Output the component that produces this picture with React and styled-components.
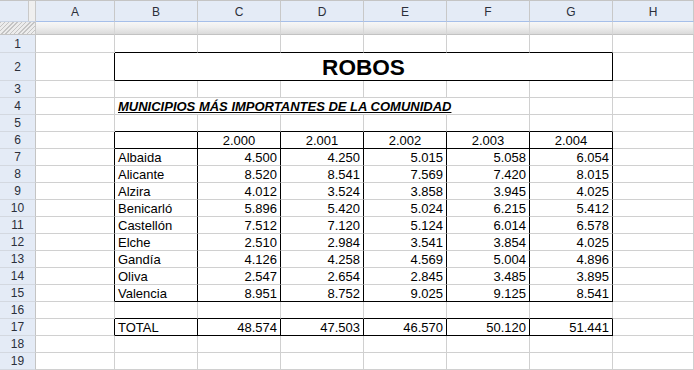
import React from "react";
import styled, { createGlobalStyle } from "styled-components";

const GlobalStyle = createGlobalStyle`
  html, body { margin: 0; padding: 0; background: #fff; overflow: hidden; }
  body { font-family: "Liberation Sans", Arial, sans-serif; }
`;

const COLS = ["A", "B", "C", "D", "E", "F", "G", "H"];
const GRID = "#d0d0d0";
const INK = "#000";

const Sheet = styled.div`
  display: grid;
  grid-template-columns: 36px 79px repeat(6, 83px) 81px;
  grid-template-rows: 22px 13px 18px 28px repeat(17, 17px);
  width: 694px;
  height: 370px;
  background: #fff;
`;

const Corner = styled.div`
  position: relative;
  box-sizing: border-box;
  background: #e4ebf6;
  border-top: 1px solid #c4c4c4;
  border-bottom: 1px solid #c8d3e4;
  border-right: 1px solid #c8c8c8;
`;

const Splitter = styled.div`
  position: absolute;
  top: 0;
  bottom: 0;
  right: 0;
  width: 7px;
  box-sizing: border-box;
  border-left: 1px solid #c9c9c9;
  background-color: #e6e6e6;
  background-image: radial-gradient(#f8f8f8 0.6px, transparent 0.8px);
  background-size: 2px 2px;
`;

const ColHead = styled.div`
  box-sizing: border-box;
  display: flex;
  align-items: center;
  justify-content: center;
  background: #e4ebf6;
  border-top: 1px solid #c4c4c4;
  border-bottom: 1px solid #a6bfe9;
  border-right: 1px solid #c8c8c8;
  color: #2b2f3a;
  font-size: 12px;
  padding-top: 1px;
`;

const Hatch = styled.div`
  box-sizing: border-box;
  border-bottom: 1px solid #c4c4c4;
  border-right: 1px solid #c8c8c8;
  background-color: #d9d9d9;
  background-image: repeating-linear-gradient(
    135deg,
    #c4c4c4 0px,
    #c4c4c4 1px,
    #ececec 1px,
    #ececec 3px
  );
`;

const Bar = styled.div`
  box-sizing: border-box;
  border-bottom: 1px solid #c2c2c2;
  border-right: 1px solid #d6d6d6;
  background: linear-gradient(#f7f7f7, #eeeeee 45%, #dadada);
`;

const RowHead = styled.div`
  box-sizing: border-box;
  display: flex;
  align-items: center;
  justify-content: center;
  background: #e4ebf6;
  border-right: 1px solid #c4c4c4;
  border-bottom: 1px solid #d3d8e0;
  color: #2b2f3a;
  font-size: 12px;
`;

const Cell = styled.div`
  box-sizing: border-box;
  grid-column: span ${(p) => p.$span};
  display: flex;
  align-items: center;
  justify-content: ${(p) => p.$align};
  padding: 1px 3px 0;
  border-right: 1px solid ${(p) => (p.$edgeR ? INK : GRID)};
  border-bottom: 1px solid ${(p) => (p.$edgeB ? INK : GRID)};
  white-space: nowrap;
  color: #000;
  font-size: 13px;
`;

const Title = styled.span`
  font-size: 22.6px;
  font-weight: bold;
  padding-top: 1px;
`;

const Subtitle = styled.span`
  font-weight: bold;
  font-style: italic;
  text-decoration: underline;
`;

const YEARS = ["2.000", "2.001", "2.002", "2.003", "2.004"];
const TOWNS = [
  ["Albaida", "4.500", "4.250", "5.015", "5.058", "6.054"],
  ["Alicante", "8.520", "8.541", "7.569", "7.420", "8.015"],
  ["Alzira", "4.012", "3.524", "3.858", "3.945", "4.025"],
  ["Benicarló", "5.896", "5.420", "5.024", "6.215", "5.412"],
  ["Castellón", "7.512", "7.120", "5.124", "6.014", "6.578"],
  ["Elche", "2.510", "2.984", "3.541", "3.854", "4.025"],
  ["Gandía", "4.126", "4.258", "4.569", "5.004", "4.896"],
  ["Oliva", "2.547", "2.654", "2.845", "3.485", "3.895"],
  ["Valencia", "8.951", "8.752", "9.025", "9.125", "8.541"],
];
const TOTALS = ["TOTAL", "48.574", "47.503", "46.570", "50.120", "51.441"];

// Sheet contents keyed by row, then column index (0 = A)
function buildRows() {
  const rows = {};
  for (let r = 1; r <= 19; r++) rows[r] = {};
  rows[2][1] = { span: 6, node: <Title>ROBOS</Title>, align: "center" };
  rows[4][1] = {
    span: 5,
    node: <Subtitle>MUNICIPIOS MÁS IMPORTANTES DE LA COMUNIDAD</Subtitle>,
  };
  YEARS.forEach((y, i) => {
    rows[6][2 + i] = { node: y, align: "center" };
  });
  TOWNS.forEach((row, i) => {
    row.forEach((v, c) => {
      rows[7 + i][1 + c] = { node: v, align: c === 0 ? "flex-start" : "flex-end" };
    });
  });
  TOTALS.forEach((v, c) => {
    rows[17][1 + c] = { node: v, align: c === 0 ? "flex-start" : "flex-end" };
  });
  return rows;
}

const inB2G = (c) => c >= 1 && c <= 6;

// Which gridlines are drawn as black cell borders
function edges(r, c) {
  let right = false;
  let bottom = false;
  // title box B2:G2
  if (r === 2 && c === 0) right = true;
  if (r === 1 && inB2G(c)) bottom = true;
  if (r === 2 && inB2G(c)) {
    right = true;
    bottom = true;
  }
  // table B6:G15
  if (r >= 6 && r <= 15) {
    if (c === 0) right = true;
    if (inB2G(c)) right = true;
  }
  if ((r === 5 || r === 6 || r === 15) && inB2G(c)) bottom = true;
  // total row B17:G17
  if (r === 17 && (c === 0 || inB2G(c))) right = true;
  if ((r === 16 || r === 17) && inB2G(c)) bottom = true;
  return { right, bottom };
}

export default function App() {
  const rows = buildRows();
  const body = [];
  for (let r = 1; r <= 19; r++) {
    body.push(<RowHead key={`h${r}`}>{r}</RowHead>);
    let c = 0;
    while (c < COLS.length) {
      const cell = rows[r][c];
      const span = cell && cell.span ? cell.span : 1;
      const last = c + span - 1;
      const e = edges(r, last);
      body.push(
        <Cell
          key={`${r}-${c}`}
          $span={span}
          $align={(cell && cell.align) || "flex-start"}
          $edgeR={e.right}
          $edgeB={e.bottom}
        >
          {cell ? cell.node : null}
        </Cell>
      );
      c += span;
    }
  }

  return (
    <>
      <GlobalStyle />
      <Sheet>
        <Corner>
          <Splitter />
        </Corner>
        {COLS.map((l) => (
          <ColHead key={l}>{l}</ColHead>
        ))}
        <Hatch />
        {COLS.map((l) => (
          <Bar key={`bar${l}`} />
        ))}
        {body}
      </Sheet>
    </>
  );
}
